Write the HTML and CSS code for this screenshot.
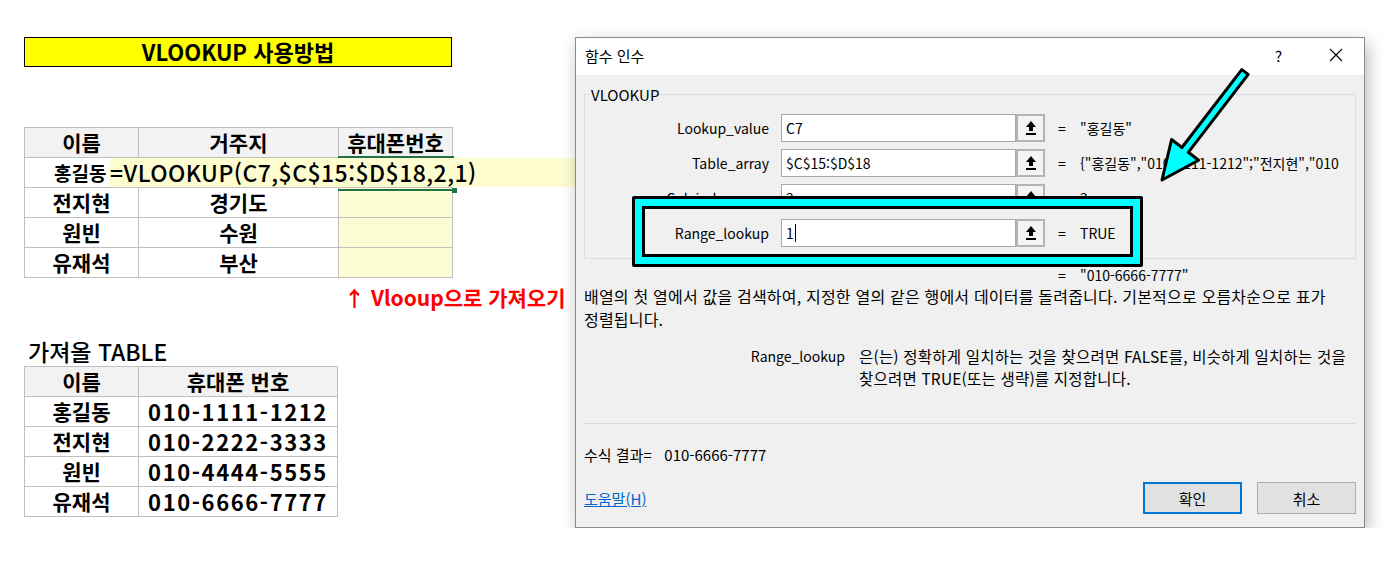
FILE: index.html
```html
<!DOCTYPE html>
<html lang="ko">
<head>
    <meta charset="UTF-8">
    <title>VLOOKUP 사용방법</title>
    <link rel="stylesheet" href="styles.css">
</head>
<body>
    <div class="page">
        <div class="sheet">
            <div class="sheet-title">VLOOKUP 사용방법</div>

            <div class="grid main-table">
                <div class="cell head">이름</div>
                <div class="cell head">거주지</div>
                <div class="cell head">휴대폰번호</div>

                <div class="edit-row">
                    <span class="edit-name">홍길동</span>
                    <span class="formula">=VLOOKUP(C7,$C$15:$D$18,2,1)</span>
                </div>

                <div class="cell">전지현</div>
                <div class="cell">경기도</div>
                <div class="cell target"></div>
                <div class="cell">원빈</div>
                <div class="cell">수원</div>
                <div class="cell target"></div>
                <div class="cell">유재석</div>
                <div class="cell">부산</div>
                <div class="cell target"></div>

                <div class="cell-cursor"></div>
            </div>

            <div class="note">↑ Vlooup으로 가져오기</div>

            <div class="sub-title">가져올 TABLE</div>
            <div class="grid lookup-table">
                <div class="cell head">이름</div>
                <div class="cell head">휴대폰 번호</div>
                <div class="cell">홍길동</div>
                <div class="cell phone">010-1111-1212</div>
                <div class="cell">전지현</div>
                <div class="cell phone">010-2222-3333</div>
                <div class="cell">원빈</div>
                <div class="cell phone">010-4444-5555</div>
                <div class="cell">유재석</div>
                <div class="cell phone">010-6666-7777</div>
            </div>
        </div>

        <div class="dialog">
            <div class="titlebar">
                <span class="dlg-title">함수 인수</span>
                <span class="tb-btn">?</span>
                <span class="tb-btn">
                    <svg width="14" height="14" viewBox="0 0 14 14"><path d="M1 1 L13 13 M13 1 L1 13" stroke="#000" stroke-width="1.1" fill="none"/></svg>
                </span>
            </div>

            <div class="dlg-body">
                <fieldset class="args">
                    <legend>VLOOKUP</legend>

                    <div class="arg">
                        <span class="arg-label">Lookup_value</span>
                        <span class="arg-input">C7</span>
                        <span class="ref-btn"><svg width="12" height="16" viewBox="0 0 12 16"><path d="M6 1 L11 7 L8 7 L8 11 L4 11 L4 7 L1 7 Z" fill="#000"/><rect x="1" y="13" width="10" height="2" fill="#000"/></svg></span>
                        <span class="eq">=</span>
                        <span class="arg-val">"홍길동"</span>
                    </div>
                    <div class="arg">
                        <span class="arg-label">Table_array</span>
                        <span class="arg-input">$C$15:$D$18</span>
                        <span class="ref-btn"><svg width="12" height="16" viewBox="0 0 12 16"><path d="M6 1 L11 7 L8 7 L8 11 L4 11 L4 7 L1 7 Z" fill="#000"/><rect x="1" y="13" width="10" height="2" fill="#000"/></svg></span>
                        <span class="eq">=</span>
                        <span class="arg-val">{"홍길동","010-1111-1212";"전지현","010</span>
                    </div>
                    <div class="arg">
                        <span class="arg-label">Col_index_num</span>
                        <span class="arg-input">2</span>
                        <span class="ref-btn"><svg width="12" height="16" viewBox="0 0 12 16"><path d="M6 1 L11 7 L8 7 L8 11 L4 11 L4 7 L1 7 Z" fill="#000"/><rect x="1" y="13" width="10" height="2" fill="#000"/></svg></span>
                        <span class="eq">=</span>
                        <span class="arg-val">2</span>
                    </div>
                    <div class="arg on-top">
                        <span class="arg-label">Range_lookup</span>
                        <span class="arg-input">1<span class="caret"></span></span>
                        <span class="ref-btn"><svg width="12" height="16" viewBox="0 0 12 16"><path d="M6 1 L11 7 L8 7 L8 11 L4 11 L4 7 L1 7 Z" fill="#000"/><rect x="1" y="13" width="10" height="2" fill="#000"/></svg></span>
                        <span class="eq">=</span>
                        <span class="arg-val">TRUE</span>
                    </div>
                </fieldset>

                <div class="arg result-row">
                    <span class="eq">=</span>
                    <span class="arg-val">"010-6666-7777"</span>
                </div>

                <p class="desc">배열의 첫 열에서 값을 검색하여, 지정한 열의 같은 행에서 데이터를 돌려줍니다. 기본적으로 오름차순으로 표가<br>정렬됩니다.</p>

                <div class="arg-help">
                    <span class="arg-help-name">Range_lookup</span>
                    <span class="arg-help-text">은(는) 정확하게 일치하는 것을 찾으려면 FALSE를, 비슷하게 일치하는 것을<br>찾으려면 TRUE(또는 생략)를 지정합니다.</span>
                </div>

                <div class="separator"></div>

                <div class="formula-result">수식 결과=&nbsp;&nbsp;&nbsp;010-6666-7777</div>

                <div class="dlg-footer">
                    <a class="help-link" href="#">도움말(H)</a>
                    <button class="dlg-btn default">확인</button>
                    <button class="dlg-btn">취소</button>
                </div>
            </div>

            <!-- annotations drawn over the dialog -->
            <div class="highlight"></div>
            <svg class="pointer" width="110" height="130" viewBox="0 0 110 130">
                <polygon points="91.8,9.6 31.9,87.5 21.6,79.5 12,120 48.6,100.3 38.3,92.3 98.2,14.4" fill="#00ffff" stroke="#000" stroke-width="3" stroke-linejoin="round"/>
            </svg>
        </div>
    </div>
</body>
</html>
```

FILE: styles.css
```css
body {
    margin: 0;
    background: #fff;
    font-family: "Noto Sans CJK KR", "Noto Sans", sans-serif;
    color: #000;
}
.page {
    display: flex;
    align-items: flex-start;
}

/* spreadsheet side */
.sheet {
    width: 575px;
    flex: none;
    padding-top: 37px;
}
.sheet-title {
    margin-left: 24px;
    width: 428px;
    height: 30px;
    box-sizing: border-box;
    border: 1px solid #000;
    background: #ffff00;
    font-weight: bold;
    font-size: 22px;
    line-height: 27px;
    text-align: center;
}
.grid {
    display: grid;
    grid-auto-rows: 30px;
    border-top: 1px solid #bfbfbf;
    border-left: 1px solid #bfbfbf;
    width: max-content;
    margin-left: 24px;
    position: relative;
}
.main-table {
    grid-template-columns: 114px 200px 114px;
    margin-top: 60px;
}
.lookup-table {
    grid-template-columns: 114px 199px;
}
.cell {
    box-sizing: border-box;
    border-right: 1px solid #bfbfbf;
    border-bottom: 1px solid #bfbfbf;
    font-weight: bold;
    font-size: 21px;
    line-height: 28px;
    text-align: center;
}
.cell.head {
    background: #f2f2f2;
}
.cell.target {
    background: #fdfdd3;
}
.cell.phone {
    font-size: 22px;
    letter-spacing: 1.6px;
}
.edit-row {
    grid-column: 1 / -1;
    display: flex;
    box-sizing: border-box;
    border-bottom: 1px solid #bfbfbf;
    font-weight: bold;
    line-height: 29px;
    white-space: nowrap;
}
.edit-name {
    padding-left: 29px;
    width: 56px;
    flex: none;
    font-size: 19px;
}
.formula {
    flex: none;
    width: 465px;
    height: 29px;
    background: #fdfdd0;
    font-size: 23px;
    font-weight: 500;
    letter-spacing: 0.45px;
}
.cell-cursor {
    position: absolute;
    left: 313px;
    top: 28px;
    width: 116px;
    height: 31px;
    border-top: 2px solid #217346;
    border-bottom: 2px solid #217346;
}
.cell-cursor::after {
    content: "";
    position: absolute;
    right: -3px;
    bottom: -4px;
    width: 5px;
    height: 5px;
    background: #217346;
}
.note {
    margin: 7px 0 0 344px;
    color: #ff0000;
    font-weight: bold;
    font-size: 21px;
    line-height: 24px;
}
.sub-title {
    margin: 27px 0 0 28px;
    font-weight: 500;
    font-size: 23px;
    line-height: 30px;
}

/* function arguments dialog */
.dialog {
    position: relative;
    margin-top: 37px;
    width: 790px;
    height: 491px;
    box-sizing: border-box;
    border: 1px solid #8a8a8a;
    background: #f0f0f0;
    box-shadow: 3px 6px 16px rgba(0, 0, 0, 0.28);
    font-size: 14px;
    display: flex;
    flex-direction: column;
}
.titlebar {
    height: 37px;
    background: #fff;
    display: flex;
    align-items: center;
    padding: 0 0 3px 9px;
    box-sizing: border-box;
    font-size: 15px;
}
.dlg-title {
    flex: 1;
}
.tb-btn {
    width: 57px;
    display: flex;
    justify-content: center;
    align-items: center;
}
.dlg-body {
    flex: 1;
    display: flex;
    flex-direction: column;
    padding: 0 8px;
}
.args {
    margin: 9px 0 0;
    padding: 9px 0 4px;
    border: 1px solid #dcdcdc;
}
.args legend {
    margin-left: 5px;
    padding: 0 1px;
    font-size: 15px;
}
.arg {
    display: flex;
    align-items: center;
    height: 28px;
    margin-bottom: 7px;
}
.arg.on-top {
    position: relative;
    z-index: 3;
}
.arg-label {
    width: 184px;
    margin-right: 12px;
    text-align: right;
    flex: none;
}
.arg-input {
    width: 235px;
    height: 28px;
    box-sizing: border-box;
    border: 1px solid #a9a9a9;
    background: #fff;
    padding-left: 4px;
    line-height: 26px;
    flex: none;
    display: flex;
    align-items: center;
}
.caret {
    display: inline-block;
    width: 1px;
    height: 18px;
    margin-left: 1px;
    background: #000;
}
.ref-btn {
    width: 29px;
    height: 28px;
    box-sizing: border-box;
    border: 2px solid #b4b4b4;
    background: #f4f4f4;
    display: flex;
    justify-content: center;
    align-items: center;
    flex: none;
}
.eq {
    margin-left: 13px;
    width: 8px;
    flex: none;
}
.arg-val {
    margin-left: 14px;
    white-space: nowrap;
}
.result-row {
    margin: 2px 0 0 461px;
}
.desc {
    margin: -4px 0 0;
    line-height: 23px;
    font-size: 16px;
    letter-spacing: 0.2px;
    white-space: nowrap;
}
.arg-help {
    display: flex;
    margin-top: 14px;
    line-height: 22px;
    font-size: 15.5px;
    white-space: nowrap;
}
.arg-help-name {
    width: 261px;
    text-align: right;
    flex: none;
    font-size: 14px;
}
.arg-help-text {
    margin-left: 14px;
    letter-spacing: 0.2px;
}
.separator {
    margin-top: 34px;
    height: 1px;
    background: #dadada;
}
.formula-result {
    margin-top: 20px;
    line-height: 21px;
    font-size: 15px;
}
.dlg-footer {
    margin-top: 17px;
    display: flex;
    align-items: center;
}
.help-link {
    flex: 1;
    color: #0066cc;
    font-size: 15px;
}
.dlg-btn {
    width: 99px;
    height: 32px;
    margin-left: 15px;
    border: 1px solid #adadad;
    background: #e1e1e1;
    font-family: inherit;
    font-size: 15px;
    padding: 0;
}
.dlg-btn.default {
    border: 2px solid #0078d7;
}
.highlight {
    position: absolute;
    left: 56px;
    top: 158px;
    width: 511px;
    height: 71px;
    box-sizing: border-box;
    border: 3px solid #000;
    border-radius: 2px;
    background: #f0f0f0;
    box-shadow: inset 0 0 0 7px #00ffff, inset 0 0 0 10px #000;
    z-index: 2;
}
.pointer {
    position: absolute;
    left: 574px;
    top: 22px;
    z-index: 4;
}
```
